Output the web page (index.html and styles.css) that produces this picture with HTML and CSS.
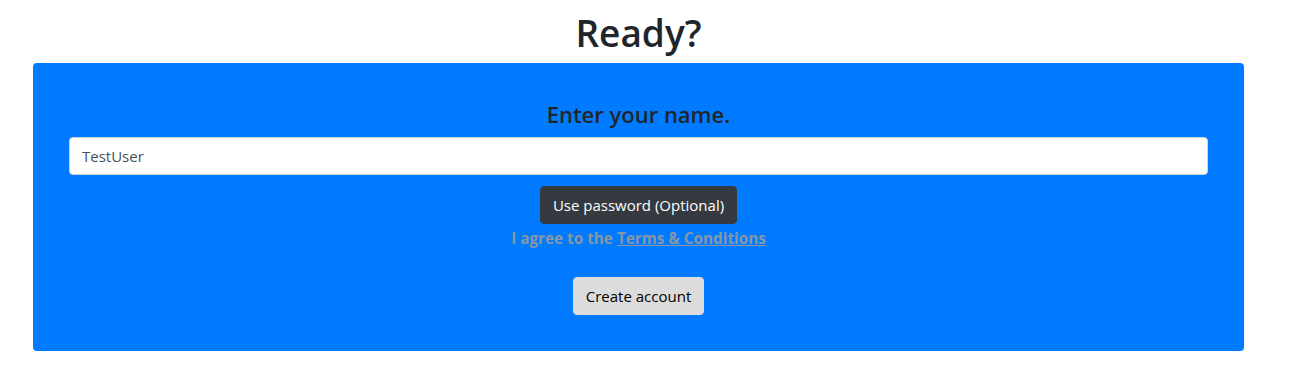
FILE: index.html
```html
<!DOCTYPE html>
<html lang="en">
<head>
<meta charset="utf-8">
<title>Ready?</title>
<link rel="stylesheet" href="styles.css">
</head>
<body>
<main class="page">
  <h1 class="title">Ready?</h1>
  <section class="panel">
    <h4 class="panel-heading">Enter your name.</h4>
    <input class="name-input" type="text" value="TestUser">
    <button class="btn btn-dark" type="button">Use password (Optional)</button>
    <p class="agree">I agree to the <a href="#" class="agree-link">Terms &amp; Conditions</a></p>
    <button class="btn btn-light" type="button">Create account</button>
  </section>
</main>
</body>
</html>
```
FILE: styles.css
```css
html, body {
  margin: 0;
  padding: 0;
  background: #fff;
}
body {
  font-family: "Open Sans", "Noto Sans", sans-serif;
  color: #212529;
  font-size: 16px;
  line-height: 1.5;
}
.page {
  width: 1211px;
  margin-left: 33px;
  padding-top: 9px;
  display: flex;
  flex-direction: column;
}
.title {
  margin: 0 0 6px 0;
  font-size: 37px;
  font-weight: 600;
  line-height: 48px;
  text-align: center;
  color: #212529;
}
.panel {
  background: #007bff;
  border-radius: 4px;
  padding: 37px 36px 36px;
  display: flex;
  flex-direction: column;
  align-items: center;
}
.panel-heading {
  margin: 0 0 8px 0;
  font-size: 22px;
  font-weight: 600;
  line-height: 29px;
  color: #212529;
}
.name-input {
  box-sizing: border-box;
  width: 100%;
  height: 38px;
  padding: 6px 12px;
  font: inherit;
  font-size: 15px;
  color: #495057;
  background: #fff;
  border: 1px solid #ced4da;
  border-radius: 4px;
  margin: 0 0 11px 0;
}
.btn {
  box-sizing: border-box;
  height: 38px;
  padding: 6px 12px;
  font: inherit;
  font-size: 15px;
  line-height: 24px;
  border: 1px solid transparent;
  border-radius: 4px;
  cursor: pointer;
}
.btn-dark {
  background: #343a40;
  border-color: #343a40;
  color: #fff;
}
.agree {
  margin: 2px 0 27px 0;
  font-size: 15.3px;
  font-weight: 700;
  line-height: 24px;
  color: #8896a6;
}
.agree-link {
  color: #8896a6;
  text-decoration: underline;
}
.btn-light {
  background: #dcdcdc;
  border-color: #dcdcdc;
  color: #000;
}
```
